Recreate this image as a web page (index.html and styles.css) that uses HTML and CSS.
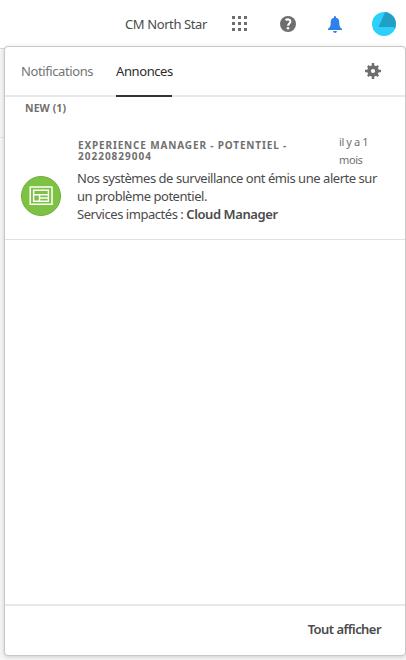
FILE: index.html
```html
<!DOCTYPE html>
<html lang="fr">
<head>
<meta charset="utf-8">
<title>Annonces</title>
<link rel="stylesheet" href="styles.css">
</head>
<body>
<header class="topbar">
  <span class="org">CM North Star</span>
  <svg class="apps" width="15" height="15" viewBox="0 0 15 15" fill="#6e6e6e"><path d="M0 0h3v3H0zM6 0h3v3H6zM12 0h3v3h-3zM0 6h3v3H0zM6 6h3v3H6zM12 6h3v3h-3zM0 12h3v3H0zM6 12h3v3H6zM12 12h3v3h-3z"/></svg>
  <svg class="help" width="16" height="16" viewBox="0 0 16 16"><circle cx="8" cy="8" r="8" fill="#6e6e6e"/><path d="M5.6 4.2C7.3 2.9 10.4 3.2 10.4 5.5C10.4 7.4 8.1 7.6 8.1 9.8" fill="none" stroke="#fff" stroke-width="2.1"/><circle cx="8" cy="12.3" r="1.3" fill="#fff"/></svg>
  <svg class="bell" width="14" height="17" viewBox="0 0 14 17" fill="#2f80ea"><path d="M6 1.2Q6 0 7 0T8 1.2V1.7C10.4 2.1 11.3 4 11.3 6.3C11.3 10.2 12 11.6 14 12.8V14H0V12.8C2 11.6 2.7 10.2 2.7 6.3C2.7 4 3.6 2.1 6 1.7ZM5 15H9Q8.6 17 7 17T5 15Z"/></svg>
  <svg class="avatar" width="24" height="24" viewBox="0 0 24 24"><circle cx="12" cy="12" r="12" fill="#2cd0fb"/><path d="M13.2 .1A12 12 0 0 1 23 16.7L21.5 15H6.5Z" fill="#239fc5"/></svg>
</header>
<main class="page"><div class="page-bar"></div></main>
<section class="panel">
  <nav class="tabs">
    <span class="tab tab-notifications">Notifications</span>
    <span class="tab tab-active">Annonces</span>
    <svg class="gear" width="16" height="16" viewBox="0 0 16 16"><g stroke="#6e6e6e" stroke-width="2.4"><path d="M8 0V16M0 8H16M2.8 2.8L13.2 13.2M13.2 2.8L2.8 13.2"/></g><circle cx="8" cy="8" r="5.8" fill="#6e6e6e"/><circle cx="8" cy="8" r="2.1" fill="#fff"/></svg>
  </nav>
  <div class="group">NEW (1)</div>
  <article class="item">
    <svg class="badge" width="40" height="40" viewBox="0 0 40 40"><circle cx="20" cy="20" r="19.5" fill="#7dc243" stroke="#6fae3d"/><g fill="none" stroke="#fff"><path d="M9.2 10.9H31V28.2H9.2Z" stroke-width="1.5"/><path d="M12.6 14.2H27.4V25.2H12.6ZM12.6 18.8H27.4M18.5 19V25M18.5 22H27.4" stroke-width="1.4"/></g></svg>
    <div class="body">
      <div class="heading">
        <h2 class="title"><span class="title-main">EXPERIENCE MANAGER - POTENTIEL -</span><span class="title-id">20220829004</span></h2>
        <time class="age">il y a 1<br>mois</time>
      </div>
      <p class="message">Nos systèmes de surveillance ont émis une alerte sur<br>un problème potentiel.<br>Services impactés : <b>Cloud Manager</b></p>
    </div>
  </article>
  <footer class="footer"><span class="all">Tout afficher</span></footer>
</section>
</body>
</html>
```
FILE: styles.css
```css
* { box-sizing: border-box; }
body {
  margin: 0;
  height: 660px;
  overflow: hidden;
  display: flex;
  flex-direction: column;
  background: #f5f5f5;
  color: #4b4b4b;
  font: 13px/18px "Noto Sans", sans-serif;
  letter-spacing: -0.4px;
}
.topbar {
  flex: none;
  height: 49px;
  display: flex;
  align-items: center;
  padding: 0 0 1px 125px;
  background: #fff;
  border-bottom: 1px solid #d8d8d8;
}
.topbar svg { flex: none; }
.org { width: 107px; white-space: nowrap; }
.help { margin-left: 33px; }
.bell { margin: 1px 0 0 32px; }
.avatar { margin-left: 30px; }
.page { flex: 1; }
.page-bar { height: 89px; border-bottom: 1px solid #e5e5e5; }
.panel {
  position: absolute;
  left: 4px;
  top: 46px;
  width: 402px;
  height: 610px;
  display: flex;
  flex-direction: column;
  background: #fff;
  border: 1px solid #c8c8c8;
  border-radius: 4px;
  box-shadow: 0 1px 4px rgba(0, 0, 0, .17);
}
.tabs {
  height: 50px;
  flex: none;
  display: flex;
  align-items: center;
  padding: 0 24px 0 16px;
  border-bottom: 2px solid #e8e8e8;
  color: #747474;
}
.tab { line-height: 48px; white-space: nowrap; }
.tab-notifications { width: 95px; }
.tab-active {
  width: 56px;
  height: 50px;
  margin-bottom: -2px;
  color: #2c2c2c;
  border-bottom: 2px solid #323232;
}
.gear { margin-left: auto; }
.group {
  height: 32px;
  padding: 3px 0 0 20px;
  color: #707070;
  font-size: 10.5px;
  font-weight: 700;
  letter-spacing: .1px;
  line-height: 17px;
}
.item {
  height: 111px;
  flex: none;
  display: flex;
  padding: 4px 16px 0;
  border-bottom: 1px solid #e1e1e1;
}
.badge { flex: none; margin: 43px 16px 0 0; }
.body { flex: 1; min-width: 0; }
.heading { display: flex; height: 36px; }
.title {
  width: 262px;
  margin: 7px 0 0;
  padding-left: 1px;
  color: #707070;
  font-size: 10px;
  line-height: 11px;
  letter-spacing: 1px;
  white-space: nowrap;
}
.title-main, .title-id { display: block; height: 11px; }
.title-main { letter-spacing: .85px; }
.age {
  color: #707070;
  font-size: 11px;
  line-height: 18px;
  white-space: nowrap;
}
.message { margin: 0; white-space: nowrap; letter-spacing: -.46px; }
.message b { font-weight: 600; letter-spacing: -.42px; }
.footer {
  height: 51px;
  margin-top: auto;
  display: flex;
  align-items: center;
  justify-content: flex-end;
  padding: 0 24px 4px 0;
  border-top: 2px solid #e8e8e8;
  font-weight: 600;
  letter-spacing: -.55px;
}
```
